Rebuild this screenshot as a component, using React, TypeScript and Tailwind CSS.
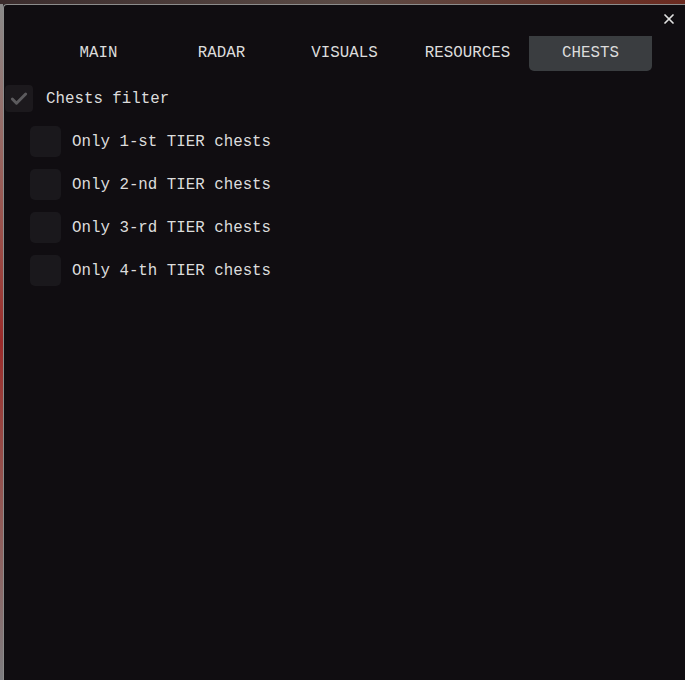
import { Check, X } from 'lucide-react';

const tabs = ['MAIN', 'RADAR', 'VISUALS', 'RESOURCES', 'CHESTS'];
const tiers = ['Only 1-st TIER chests', 'Only 2-nd TIER chests', 'Only 3-rd TIER chests', 'Only 4-th TIER chests'];

export default function App() {
  return (
    <div
      className="w-[685px] h-[680px] flex flex-col bg-[#2a2426] overflow-hidden text-[#dcdcdc] text-[15.8px] leading-none"
      style={{ fontFamily: '"Liberation Mono", "DejaVu Sans Mono", monospace' }}
    >
      <div className="h-[4px] bg-gradient-to-r from-[#3a2b2c] via-[#5a4a45] to-[#6b2a20]" />
      <div className="flex flex-1">
        <div className="w-[3px] bg-gradient-to-b from-[#8a8a8a] via-[#9b2a2a] to-[#7c7c80]" />
        <div className="relative flex-1 bg-[#100d11] border-t border-l border-[#8c8c8c] rounded-tl-[4px]">
          <button className="absolute right-[8px] top-[6px] text-[#e0e0e0]">
            <X className="w-[16px] h-[16px]" strokeWidth={2.6} />
          </button>

          <div className="flex pl-[33px] mt-[30px] h-[36px] pt-[1px]">
            {tabs.map((t) => (
              <div
                key={t}
                className={`w-[123px] flex items-center justify-center ${
                  t === 'CHESTS' ? 'bg-[#3a3d40] rounded-b-[5px]' : ''
                }`}
              >
                {t}
              </div>
            ))}
          </div>

          <div className="flex items-center mt-[14px] pl-[1px] h-[27px]">
            <div className="w-[28px] h-[27px] rounded-[4px] bg-[#1c191d] flex items-center justify-center">
              <Check className="w-[20px] h-[20px] text-[#5c5b5e]" strokeWidth={3.5} />
            </div>
            <span className="ml-[13px] pt-[2px]">Chests filter</span>
          </div>

          <div className="flex flex-col gap-[12px] mt-[14px] pl-[26px]">
            {tiers.map((t) => (
              <div key={t} className="flex items-center h-[31px]">
                <div className="w-[31px] h-[31px] rounded-[5px] bg-[#1a181c]" />
                <span className="ml-[11px] pt-[2px]">{t}</span>
              </div>
            ))}
          </div>
        </div>
      </div>
    </div>
  );
}
